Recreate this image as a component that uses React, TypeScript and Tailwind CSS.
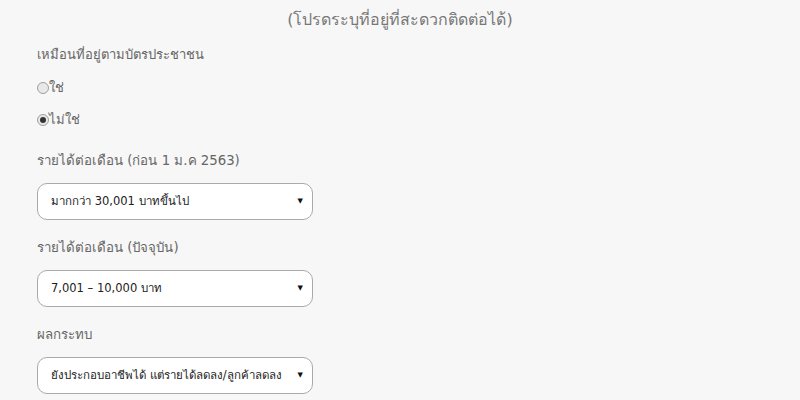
import React from "react";

const font = { fontFamily: '"DejaVu Sans", "Noto Sans", sans-serif' };

function Select({ value }: { value: string }) {
  return (
    <div className="w-[276px] h-[37px] rounded-[10px] border border-[#aaaaaa] bg-white flex items-center justify-between pl-[13px] pr-[9px]">
      <span className="text-[11.5px] text-[#222222]">{value}</span>
      <span className="text-[7px] text-[#111111]">▼</span>
    </div>
  );
}

function Radio({ checked, label }: { checked: boolean; label: string }) {
  return (
    <div className="flex items-center h-[20px] text-[13px] text-[#666666]">
      <span className="w-[12px] h-[12px] rounded-full border border-[#a0a0a0] bg-[#e8e8e8] flex items-center justify-center">
        {checked && <span className="w-[6px] h-[6px] rounded-full bg-[#333333]" />}
      </span>
      <span>{label}</span>
    </div>
  );
}

export default function App() {
  return (
    <div className="w-[800px] h-[400px] bg-[#f7f7f7] overflow-hidden" style={font}>
      <div className="pt-[7px] text-center text-[16px] text-[#777777] h-[25px] leading-[25px]">
        (โปรดระบุที่อยู่ที่สะดวกติดต่อได้)
      </div>
      <div className="pl-[37px] flex flex-col">
        <div className="mt-[20px] text-[13px] text-[#666666] leading-[20px]">เหมือนที่อยู่ตามบัตรประชาชน</div>
        <div className="mt-[13px]"><Radio checked={false} label="ใช่" /></div>
        <div className="mt-[12px]"><Radio checked={true} label="ไม่ใช่" /></div>
        <div className="mt-[21px] text-[13.3px] text-[#666666] leading-[20px]">รายได้ต่อเดือน (ก่อน 1 ม.ค 2563)</div>
        <div className="mt-[12px]"><Select value="มากกว่า 30,001 บาทขึ้นไป" /></div>
        <div className="mt-[18px] text-[13.3px] text-[#666666] leading-[20px]">รายได้ต่อเดือน (ปัจจุบัน)</div>
        <div className="mt-[12px]"><Select value="7,001 – 10,000 บาท" /></div>
        <div className="mt-[18px] text-[13.3px] text-[#666666] leading-[20px]">ผลกระทบ</div>
        <div className="mt-[12px]"><Select value="ยังประกอบอาชีพได้ แต่รายได้ลดลง/ลูกค้าลดลง" /></div>
      </div>
    </div>
  );
}
